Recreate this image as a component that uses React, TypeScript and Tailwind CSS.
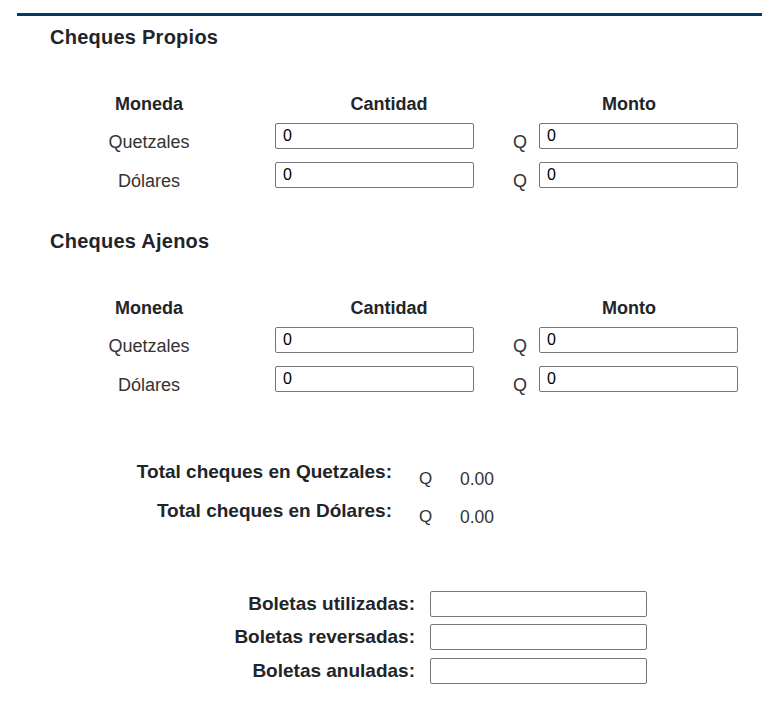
const rows = ["Quetzales", "Dólares"];

function ChequeSection({ title, className }: { title: string; className?: string }) {
  return (
    <section className={className}>
      <h2 className="ml-[50px] text-[20px] leading-[24px] font-bold tracking-[0.25px] text-[#212529]">{title}</h2>

      {/* column headers */}
      <div className="mt-[44px] pl-[29px] grid grid-cols-[240px_240px_240px] text-[18px] leading-[22px] font-bold text-[#212529] text-center">
        <div>Moneda</div>
        <div>Cantidad</div>
        <div>Monto</div>
      </div>

      <div className="mt-[5px] pl-[29px]">
        {rows.map((name) => (
          <div key={name} className="grid grid-cols-[240px_240px_240px] h-[39px]">
            <div className="pt-[11px] text-center text-[18px] leading-[22px] text-[#333]">{name}</div>
            <div className="pt-[3px] pl-[6px]">
              <input
                defaultValue="0"
                className="block w-[199px] h-[26px] border border-[#767676] rounded-[2px] pl-[7px] text-[16px] text-black outline-none"
              />
            </div>
            <div className="flex items-start pl-[4px]">
              <span className="pt-[11px] w-[26px] text-[18px] leading-[22px] text-[#333]">Q</span>
              <input
                defaultValue="0"
                className="mt-[3px] block w-[199px] h-[26px] border border-[#767676] rounded-[2px] pl-[7px] text-[16px] text-black outline-none"
              />
            </div>
          </div>
        ))}
      </div>
    </section>
  );
}

function TotalRow({ label, offset }: { label: string; offset: string }) {
  return (
    <div className="flex h-[39px]">
      <div className="w-[392px] text-right text-[19px] leading-[22px] font-bold text-[#212529]">{label}</div>
      <div className={`${offset} ml-[27px] w-[41px] text-[17px] leading-[22px] text-[#333]`}>Q</div>
      <div className={`${offset} text-[17.5px] leading-[22px] text-[#333]`}>0.00</div>
    </div>
  );
}

function BoletaRow({ label, className }: { label: string; className?: string }) {
  return (
    <div className={`flex items-start ${className ?? ""}`}>
      <label className="w-[415px] text-right text-[19px] leading-[26px] font-bold text-[#212529]">{label}</label>
      <input className="ml-[15px] block w-[217px] h-[26px] border border-[#767676] rounded-[2px] px-[6px] text-[16px] outline-none" />
    </div>
  );
}

export default function App() {
  return (
    <div className="w-[772px] h-[706px] bg-white font-['Liberation_Sans',Arial,sans-serif] overflow-hidden">
      <div className="pt-[13px] pl-[17px]">
        <div className="w-[745px] h-[3px] bg-[#003a66]" />
      </div>

      <ChequeSection title="Cheques Propios" className="mt-[9px]" />
      <ChequeSection title="Cheques Ajenos" className="mt-[31px]" />

      {/* totals */}
      <div className="mt-[59px]">
        <TotalRow label="Total cheques en Quetzales:" offset="pt-[7px]" />
        <TotalRow label="Total cheques en Dólares:" offset="pt-[6px]" />
      </div>

      {/* boletas */}
      <div className="mt-[52px]">
        <BoletaRow label="Boletas utilizadas:" />
        <BoletaRow label="Boletas reversadas:" className="mt-[7px]" />
        <BoletaRow label="Boletas anuladas:" className="mt-[8px]" />
      </div>
    </div>
  );
}
